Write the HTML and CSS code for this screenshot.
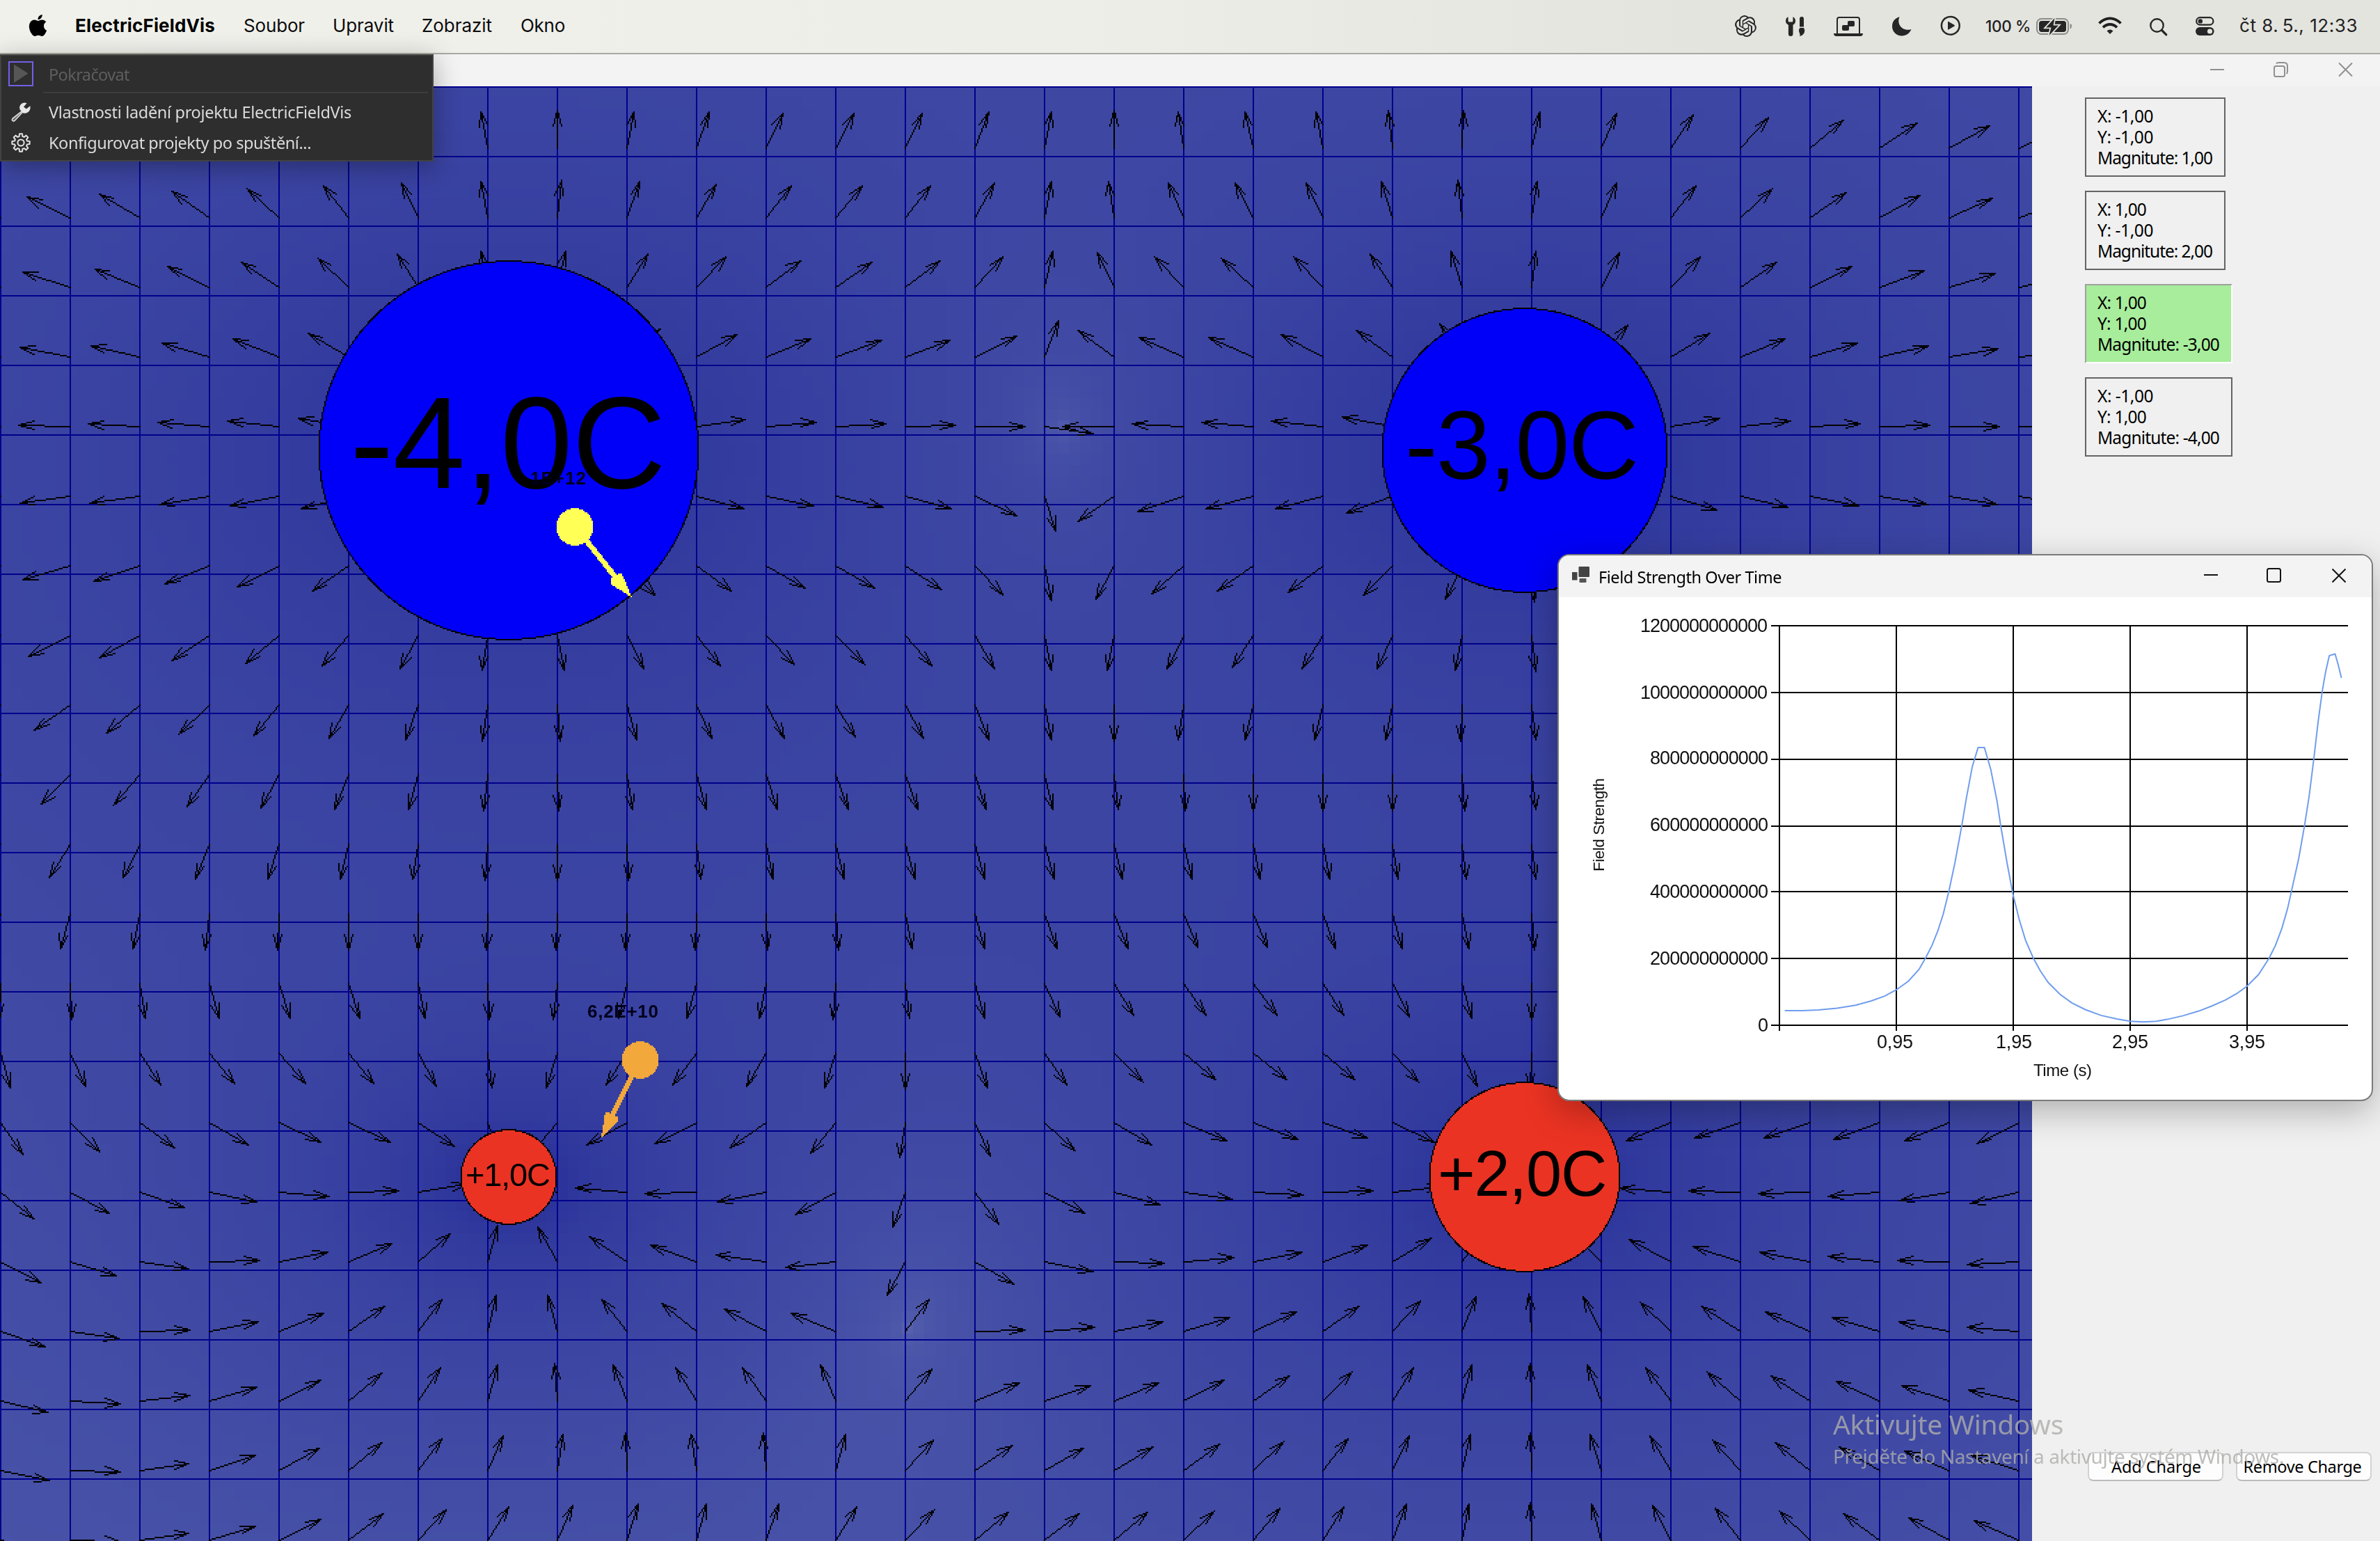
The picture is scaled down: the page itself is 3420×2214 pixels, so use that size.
FILE: index.html
```html
<!DOCTYPE html>
<html lang="cs">
<head>
<meta charset="utf-8">
<title>ElectricFieldVis</title>
<link rel="stylesheet" href="styles.css">
</head>
<body>
<div class="desktop">
  <header class="menubar">
    <nav class="menus">
      <svg class="apple" viewBox="0 0 24 24"><path d="M12.152 6.896c-.948 0-2.415-1.078-3.96-1.04-2.04.027-3.91 1.183-4.961 3.014-2.117 3.675-.546 9.103 1.519 12.09 1.013 1.454 2.208 3.09 3.792 3.039 1.52-.065 2.09-.987 3.935-.987 1.831 0 2.35.987 3.96.948 1.637-.026 2.676-1.48 3.676-2.948 1.156-1.688 1.636-3.325 1.662-3.415-.039-.013-3.182-1.221-3.22-4.857-.026-3.04 2.48-4.494 2.597-4.559-1.429-2.09-3.623-2.324-4.39-2.376-2-.156-3.675 1.09-4.61 1.09zM15.53 3.83c.843-1.012 1.4-2.427 1.245-3.83-1.207.052-2.662.805-3.532 1.818-.78.896-1.454 2.338-1.273 3.714 1.338.104 2.715-.688 3.559-1.701"/></svg>
      <span class="appname"><span data-w="201">ElectricFieldVis</span></span>
      <span><span data-w="88">Soubor</span></span>
      <span><span data-w="88">Upravit</span></span>
      <span><span data-w="101">Zobrazit</span></span>
      <span><span data-w="64">Okno</span></span>
    </nav>
    <div class="status">
      <svg class="i-gpt" viewBox="0 0 24 24"><path d="M22.2819 9.8211a5.9847 5.9847 0 0 0-.5157-4.9108 6.0462 6.0462 0 0 0-6.5098-2.9A6.0651 6.0651 0 0 0 4.9807 4.1818a5.9847 5.9847 0 0 0-3.9977 2.9 6.0462 6.0462 0 0 0 .7427 7.0966 5.98 5.98 0 0 0 .511 4.9107 6.051 6.051 0 0 0 6.5146 2.9001A5.9847 5.9847 0 0 0 13.2599 24a6.0557 6.0557 0 0 0 5.7718-4.2058 5.9894 5.9894 0 0 0 3.9977-2.9001 6.0557 6.0557 0 0 0-.7475-7.0729zm-9.022 12.6081a4.4755 4.4755 0 0 1-2.8764-1.0408l.1419-.0804 4.7783-2.7582a.7948.7948 0 0 0 .3927-.6813v-6.7369l2.02 1.1686a.071.071 0 0 1 .038.0615v5.5826a4.504 4.504 0 0 1-4.4945 4.4944zm-9.6607-4.1254a4.4708 4.4708 0 0 1-.5346-3.0137l.142.0852 4.783 2.7582a.7712.7712 0 0 0 .7806 0l5.8428-3.3685v2.3324a.0804.0804 0 0 1-.0332.0615L9.74 19.9502a4.4992 4.4992 0 0 1-6.1408-1.6464zM2.3408 7.8956a4.485 4.485 0 0 1 2.3655-1.9728V11.6a.7664.7664 0 0 0 .3879.6765l5.8144 3.3543-2.0201 1.1685a.0757.0757 0 0 1-.071 0l-4.8303-2.7865A4.504 4.504 0 0 1 2.3408 7.872zm16.5963 3.8558L13.1038 8.364 15.1192 7.2a.0757.0757 0 0 1 .071 0l4.8303 2.7913a4.4944 4.4944 0 0 1-.6765 8.1042v-5.6772a.79.79 0 0 0-.407-.667zm2.0107-3.0231l-.142-.0852-4.7735-2.7818a.7759.7759 0 0 0-.7854 0L9.409 9.2297V6.8974a.0662.0662 0 0 1 .0284-.0615l4.8303-2.7866a4.4992 4.4992 0 0 1 6.6802 4.66zM8.3065 12.863l-2.02-1.1638a.0804.0804 0 0 1-.038-.0567V6.0742a4.4992 4.4992 0 0 1 7.3757-3.4537l-.142.0805L8.704 5.459a.7948.7948 0 0 0-.3927.6813zm1.0976-2.3654l2.602-1.4998 2.6069 1.4998v2.9994l-2.5974 1.4997-2.6067-1.4997Z"/></svg>
      <svg class="i-tools" viewBox="0 0 28 28"><path d="M3.600 .3V6.200Q3.600 7.500 4.900 7.500H9.100Q10.400 7.500 10.400 6.200V.3Q14 2 14 6.300Q14 9.800 10.500 11.800V24.500Q10.500 28 7 28Q3.900 28 3.900 24.500V11.800Q0 9.800 0 6.300Q0 2 3.600 .3Z"/><path d="M20 3Q20 0 23 0Q26 0 26 3V14.500H20Z"/><path d="M20.500 16H26Q28 19 27 22Q25.500 27 20 28Q21 25.500 19.700 23Q17.800 18.500 20.500 16Z"/></svg>
      <svg class="i-laptop" viewBox="0 0 42 28"><path d="M5 24V4Q5 1 8 1H34Q37 1 37 4V24" fill="none" stroke="#262626" stroke-width="2"/><path d="M0 24H42Q42 28 38 28H4Q0 28 0 24Z"/><rect x="20" y="6" width="10" height="8" rx="2"/><rect x="12" y="12" width="10" height="8" rx="2"/></svg>
      <svg class="i-moon" viewBox="0 0 28 28"><path d="M10.500 .3C6 11 15 22 27.500 18C25 24 20 27.500 14 27.500C6 27.500 0 21.500 0 14C0 7 4 2 10.500 .3Z"/></svg>
      <svg class="i-play" viewBox="0 0 30 30"><circle cx="14.800" cy="14.800" r="12.900" fill="none" stroke="#262626" stroke-width="2.500"/><path d="M11 9.500Q11 8.500 12 9L20.500 14Q21.500 14.800 20.500 15.500L12 20.500Q11 21 11 20Z"/></svg>
      <span class="percent"><span data-w="65">100&nbsp;%</span></span>
      <svg class="i-batt" viewBox="0 0 52 26"><rect x="1" y="2" width="45" height="22" rx="6.500" fill="none" stroke="#8c8c89" stroke-width="2"/><rect x="4" y="5" width="39" height="16" rx="4"/><path d="M48.500 9Q52 10.500 51 13Q51 15.500 48.500 17Z" fill="#8c8c89"/><path d="M26.500 1L14 14.500H21.500L18.500 26L32 11.500H24.500Z" stroke="#e4e4df" stroke-width="3.500" paint-order="stroke"/></svg>
      <svg class="i-wifi" viewBox="0 0 34 26"><g fill="none" stroke="#1f1f1f" stroke-width="3.800"><path d="M1.500 9.500Q8.500 2.300 17 2.300T32.500 9.500"/><path d="M7 15.300Q11.500 11 17 11T27 15.300"/></g><path d="M12.500 20.500Q17 16.300 21.500 20.500L17 25Z"/></svg>
      <svg class="i-search" viewBox="0 0 26 26"><g fill="none" stroke="#262626"><circle cx="10.500" cy="10.500" r="9.200" stroke-width="2.400"/><path d="M17.500 17.500L23.800 23.800" stroke-width="3.200" stroke-linecap="round"/></g></svg>
      <svg class="i-cc" viewBox="0 0 27 27"><rect x="1.200" y="1.200" width="24.200" height="10.400" rx="5.200" fill="none" stroke="#262626" stroke-width="2.200"/><circle cx="6.800" cy="6.400" r="3.200"/><rect x="0" y="15" width="26.600" height="12" rx="6"/><circle cx="20.500" cy="21" r="3.600" fill="#e4e4df"/></svg>
      <span class="clock"><span data-w="170">čt 8.&#8201;5., 12:33</span></span>
    </div>
  </header>

  <div class="titlebar">
    <svg width="206" height="22" viewBox="0 0 206 22"><g fill="none" stroke="#909090" stroke-width="2"><path d="M0 11H20"/><rect x="92" y="6" width="15" height="15" rx="2.500"/><path d="M95 2.500Q96 1 98 1H106Q111 1 111 6V14Q111 16 109.500 17"/><path d="M185 1.500L204 20.500M204 1.500L185 20.500"/></g></svg>
  </div>

  <div class="client">
    <main class="field">
      <canvas id="field" width="1460" height="1045"></canvas>
      <svg class="labels" viewBox="0 124 2920 2090">
        <g class="charge">
          <text x="503" y="701" font-size="187" textLength="454">-4,0C</text>
          <text x="2019" y="688" font-size="140" textLength="336">-3,0C</text>
          <text x="669" y="1703.500" font-size="47" textLength="122">+1,0C</text>
          <text x="2066" y="1717.500" font-size="92" textLength="243.500">+2,0C</text>
        </g>
        <g class="probe">
          <text x="762" y="696" textLength="80">1E+12</text>
          <text x="844" y="1462" textLength="102">6,2E+10</text>
        </g>
      </svg>
    </main>
    <aside class="side">
      <div class="cards">
        <div class="card"><span data-w="80">X: -1,00</span><span data-w="80">Y: -1,00</span><span data-w="165">Magnitute: 1,00</span></div>
        <div class="card"><span data-w="70">X: 1,00</span><span data-w="80">Y: -1,00</span><span data-w="165">Magnitute: 2,00</span></div>
        <div class="card wide selected"><span data-w="70">X: 1,00</span><span data-w="70">Y: 1,00</span><span data-w="175">Magnitute: -3,00</span></div>
        <div class="card wide"><span data-w="80">X: -1,00</span><span data-w="70">Y: 1,00</span><span data-w="175">Magnitute: -4,00</span></div>
      </div>
      <div class="actions">
        <button type="button" class="add"><span data-w="129">Add Charge</span></button>
        <button type="button" class="remove"><span data-w="170">Remove Charge</span></button>
      </div>
    </aside>
  </div>

  <div class="dropdown">
    <div class="item disabled">
      <svg class="boxed" viewBox="0 0 36 36"><rect x="1" y="1" width="34" height="34" fill="none" stroke="#7160e8" stroke-width="2"/><path d="M8 4.500V31L28.500 17.500Z" fill="#565656"/></svg>
      <span data-w="116">Pokračovat</span>
    </div>
    <div class="sep"></div>
    <div class="item">
      <svg viewBox="0 0 28 28"><path d="M16.500 12L2.200 23.200Q.6 25.200 2.300 26.500Q4 27.800 5.500 26L17 13.500" fill="#6a6a6a" stroke="#d6d6d6" stroke-width="1.800"/><path d="M22.500 1.200Q17 -.8 13.600 3.200Q11.200 6.500 12.600 10.400L17.300 15.500Q22 16.500 25.400 13.200Q28.500 9.800 27.300 5.300L21.800 9.600L18 6.400Z" fill="#e8e8e8"/></svg>
      <span data-w="435">Vlastnosti ladění projektu ElectricFieldVis</span>
    </div>
    <div class="item last">
      <svg viewBox="-14 -14 28 28"><g fill="none" stroke="#e4e4e4" stroke-width="2" stroke-linejoin="round"><path d="M8.980 -2.410L12.640 -2V2L8.980 2.410L8.050 4.650L10.360 7.520L7.520 10.360L4.650 8.050L2.410 8.980L2 12.640H-2L-2.410 8.980L-4.650 8.050L-7.520 10.360L-10.360 7.520L-8.050 4.650L-8.980 2.410L-12.640 2V-2L-8.980 -2.410L-8.050 -4.650L-10.360 -7.520L-7.520 -10.360L-4.650 -8.050L-2.410 -8.980L-2 -12.640H2L2.410 -8.980L4.650 -8.050L7.520 -10.360L10.360 -7.520L8.050 -4.650Z"/><circle r="4.600"/></g></svg>
      <span data-w="377">Konfigurovat projekty po spuštění...</span>
    </div>
  </div>

  <div class="watermark">
    <p class="big"><span data-w="331">Aktivujte Windows</span></p>
    <p class="small"><span data-w="648">Přejděte do Nastavení a aktivujte systém Windows.</span></p>
  </div>

  <section class="chartwin">
    <div class="charttitle">
      <svg class="formicon" viewBox="0 0 26 24"><rect x="0" y="8" width="7.500" height="11.500" fill="#444"/><rect x="9.500" y="0" width="15.500" height="15" rx="1" fill="#444"/><rect x="10.500" y="17" width="10" height="6" rx="1" fill="#555"/></svg>
      <span class="caption"><span data-w="263">Field Strength Over Time</span></span>
      <svg width="204" height="22" viewBox="0 0 204 22"><g fill="none" stroke="#111" stroke-width="2"><path d="M-1 10H19"/><rect x="90" y="1" width="19" height="19" rx="2.500"/><path d="M183.500 1.500L202.500 20.500M202.500 1.500L183.500 20.500"/></g></svg>
    </div>
    <svg class="chart" viewBox="2240 858 1168 721">
      <g stroke="#000" stroke-width="2" shape-rendering="crispEdges">
        <path d="M2545 899H3374M2545 995H3374M2545 1091H3374M2545 1187H3374M2545 1281H3374M2545 1377H3374M2545 1473H3374"/>
        <path d="M2557 898V1481M2725 898V1481M2893 898V1481M3061 898V1481M3229 898V1481"/>
      </g>
      <g class="ylab">
        <text x="2357" y="908" textLength="183">1200000000000</text>
        <text x="2357" y="1004" textLength="183">1000000000000</text>
        <text x="2371" y="1098" textLength="170">800000000000</text>
        <text x="2371" y="1194" textLength="170">600000000000</text>
        <text x="2371" y="1290" textLength="170">400000000000</text>
        <text x="2371" y="1386" textLength="170">200000000000</text>
        <text x="2526" y="1482">0</text>
        <text x="2697" y="1506" textLength="52">0,95</text>
        <text x="2868" y="1506" textLength="52">1,95</text>
        <text x="3035" y="1506" textLength="52">2,95</text>
        <text x="3203" y="1506" textLength="52">3,95</text>
      </g>
      <text class="axis" x="2922" y="1546" textLength="84">Time (s)</text>
      <text class="axis side-axis" transform="translate(2305 1252) rotate(-90)" textLength="134">Field Strength</text>
      <g transform="translate(2230 780) scale(.7589 .5230)">
        <polyline class="series" points="441,1285 475,1285 505,1283 540,1278 575,1270 605,1258 630,1245 652,1228 675,1204 695,1172 707,1142 720,1105 731,1065 741,1020 752,955 763,880 776,778 785,700 796,615 807,562 819,562 831,622 843,710 850,778 862,880 873,965 885,1035 897,1092 912,1142 925,1176 940,1208 962,1240 985,1264 1010,1282 1040,1298 1070,1308 1095,1314 1120,1316 1145,1314 1165,1309 1195,1299 1225,1286 1250,1272 1275,1256 1297,1238 1316,1218 1338,1186 1358,1141 1370,1106 1382,1060 1393,1005 1403,940 1414,868 1425,778 1434,695 1443,590 1451,490 1459,405 1465,355 1472,310 1483,305 1489,335 1495,371"/>
      </g>
    </svg>
  </section>
</div>
<script src="field.js"></script>
</body>
</html>
```
FILE: styles.css
```css
* { box-sizing: border-box; }
body { margin: 0; font-family: "Noto Sans", sans-serif; }
svg { display: block; flex: none; overflow: visible; }
.desktop { position: relative; width: 3420px; height: 2214px; overflow: hidden; display: flex; flex-direction: column; background: #f0f0f0; }

.menubar { height: 78px; display: flex; justify-content: space-between; background: linear-gradient(90deg, #f1f1ec, #eeeee9 45%, #e4e4df 72%, #e4e4df); border-bottom: 2px solid #a9a99f; font: 26px/74px Inter, sans-serif; color: #0c0c0c; white-space: nowrap; }
.menus { display: grid; grid-template-columns: 69px 242px 128px 128px 142px 80px; padding-left: 39px; }
.apple { width: 31px; height: 31px; margin-top: 21px; fill: #000; }
.appname { font-weight: 700; color: #000; }
.status { display: flex; width: 927px; fill: #262626; color: #222; }
.i-gpt { width: 31px; height: 31px; margin-top: 22px; }
.i-tools { width: 28px; height: 28px; margin: 24px 0 0 42px; }
.i-laptop { width: 42px; height: 28px; margin: 24px 0 0 41px; }
.i-moon { width: 28px; height: 28px; margin: 24px 0 0 42px; }
.i-play { width: 30px; height: 30px; margin: 22px 0 0 41px; }
.percent { width: 66px; margin-left: 35px; font-size: 22.5px; font-weight: 500; line-height: 76px; }
.i-batt { width: 52px; height: 26px; margin: 25px 0 0 7px; }
.i-wifi { width: 34px; height: 26px; margin: 24px 0 0 37px; }
.i-search { width: 26px; height: 26px; margin: 26px 0 0 40px; }
.i-cc { width: 27px; height: 27px; margin: 24px 0 0 40px; }
.clock { margin-left: 36px; }

.titlebar { height: 46px; background: #f3f3f3; display: flex; justify-content: flex-end; padding: 11px 38px 0 0; }
.client { display: flex; height: 2090px; }
.field { position: relative; width: 2920px; height: 2090px; }
.field canvas { display: block; width: 2920px; height: 2090px; image-rendering: pixelated; }
.labels { position: absolute; inset: 0; width: 2920px; height: 2090px; font-family: "Liberation Sans", Arial, sans-serif; }
.probe { font-size: 26px; font-weight: 700; fill: #00001c; }

.side { width: 500px; display: flex; flex-direction: column; justify-content: space-between; font-size: 24.5px; color: #000; }
.cards { display: flex; flex-direction: column; gap: 20px; align-items: flex-start; padding: 16px 0 0 76px; }
.card { width: 202px; height: 114px; border: 2px solid #646464; padding: 10px 0 0 16px; display: flex; flex-direction: column; align-items: flex-start; line-height: 30px; white-space: nowrap; }
.card.wide { width: 212px; }
.card.selected { background: #a7ed9b; border-color: #a0a0a0 #fff #fff #a0a0a0; }
.actions { display: flex; gap: 18px; padding: 0 13px 86px 80px; }
.actions button { width: 195px; flex: none; height: 42px; padding: 0; border: 2px solid #d2d2d2; border-bottom-color: #bcbcbc; border-radius: 8px; background: #fdfdfd; font: 23.5px/38px "Noto Sans", sans-serif; color: #000; white-space: nowrap; }
.actions .add { padding-left: 2px; }
.actions .remove { padding-right: 4px; }

.dropdown { position: absolute; left: 0; top: 78px; width: 623px; height: 154px; background: #2e2e2e; border: 2px solid #424242; box-shadow: 0 8px 36px rgba(0,0,0,.32); padding-left: 14px; color: #dadada; font-size: 23.5px; white-space: nowrap; }
.item { display: flex; align-items: center; height: 44px; gap: 26px; }
.item.disabled { height: 52px; color: #5e5e5e; gap: 22px; padding-top: 2px; margin-left: -4px; }
.item svg { width: 28px; height: 28px; }
.item .boxed { width: 36px; height: 36px; margin-top: -3px; }
.sep { height: 2px; background: #3d3d3d; margin: 0 6px 5px 46px; }

.watermark { position: absolute; left: 2634px; top: 2018px; color: rgba(172,172,170,.8); white-space: nowrap; }
.watermark p { margin: 0; }
.watermark .big { font-size: 39px; line-height: 56px; }
.watermark .small { font-size: 28px; line-height: 37px; }

.chartwin { position: absolute; left: 2238px; top: 796px; width: 1172px; height: 786px; background: #fff; border: 2px solid #7b7b7b; border-radius: 17px; overflow: hidden; box-shadow: 0 14px 50px rgba(0,0,0,.28); }
.charttitle { height: 60px; background: #f3f3f3; display: flex; padding: 16px 36px 0 19px; }
.charttitle > svg:last-child { margin-left: auto; margin-top: 2px; }
.formicon { width: 26px; height: 24px; }
.caption { margin: -1px 0 0 12px; font-size: 23.5px; line-height: 32px; color: #000; white-space: nowrap; }
.chart { width: 1168px; height: 721px; font-family: "Liberation Sans", Arial, sans-serif; }
.ylab { font-size: 27px; fill: #111; }
.axis { font-size: 24px; fill: #111; }
.side-axis { font-size: 22.5px; }
.series { fill: none; stroke: #6f9dee; stroke-width: 2; vector-effect: non-scaling-stroke; }
```
FILE: field.js
```js
// Stretch each label to the advance width of the system UI font.
for (const el of document.querySelectorAll('[data-w]')) {
  const natural = el.getBoundingClientRect().width;
  el.style.letterSpacing = (el.dataset.w - natural) / el.textContent.length + 'px';
}

const ctx = document.getElementById('field').getContext('2d');
const W = 1460, H = 1044, UX = W / 4, UY = H / 4;
const charges = [[-1, -1, 1], [1, -1, 2], [1, 1, -3], [-1, 1, -4]];

function force(px, py) {
  const x = (px - W / 2) / UX, y = (H / 2 - py) / UY;
  let fx = 0, fy = 0;
  for (const [cx, cy, q] of charges) {
    const dx = x - cx, dy = y - cy, r = Math.hypot(dx, dy) || 1e-6;
    fx -= q * dx / r ** 3;
    fy -= q * dy / r ** 3;
  }
  return [fx, fy];
}

// Background: 8px cells shaded by the logarithm of the field strength.
for (let y = 0; y < 1045; y += 8) {
  for (let x = 0; x < W; x += 8) {
    const t = Math.max(-1.8, Math.min(2.3, Math.log10(Math.hypot(...force(x, y)))));
    ctx.fillStyle = `rgb(${66 - 11 * t}, ${76 - 12 * t}, ${165 - 5 * t})`;
    ctx.fillRect(x, y, 8, 8);
  }
}

ctx.fillStyle = '#00008b';
for (let x = 0; x < W; x += 50) ctx.fillRect(x, 0, 1, 1045);
for (let y = 0; y < 1045; y += 50) ctx.fillRect(0, y, W, 1);

function line(x0, y0, x1, y1) {
  x0 = Math.trunc(x0); y0 = Math.trunc(y0); x1 = Math.trunc(x1); y1 = Math.trunc(y1);
  const n = Math.max(Math.abs(x1 - x0), Math.abs(y1 - y0), 1);
  for (let i = 0; i <= n; i++) {
    ctx.fillRect(Math.round(x0 + (x1 - x0) * i / n), Math.round(y0 + (y1 - y0) * i / n), 1, 1);
  }
}

ctx.fillStyle = '#000';
for (let x = 0; x < W; x += 50) {
  for (let y = 1044; y >= -50; y -= 50) {
    const [fx, fy] = force(x, y), m = Math.hypot(fx, fy);
    const tx = x + fx / m * UX * 0.1, ty = y - fy / m * UY * 0.1;
    const a = Math.atan2(ty - y, tx - x);
    line(x, y, tx, ty);
    for (const w of [-0.28, 0.28]) line(tx, ty, tx - 11 * Math.cos(a + w), ty - 11 * Math.sin(a + w));
  }
}

// Solid disc with an optional one-pixel outline, without antialiasing.
function disc(cx, cy, r, fill, outline) {
  const span = k => (k > 0 ? Math.round(Math.sqrt(k)) : -1);
  for (let y = -r; y <= r; y++) {
    const w = span((r + 0.3) ** 2 - y * y);
    if (outline) {
      ctx.fillStyle = '#000';
      ctx.fillRect(cx - w, cy + y, 2 * w + 1, 1);
      const v = span((r - 0.7) ** 2 - y * y);
      if (v < 0) continue;
      ctx.fillStyle = fill;
      ctx.fillRect(cx - v, cy + y, 2 * v + 1, 1);
    } else {
      ctx.fillStyle = fill;
      ctx.fillRect(cx - w, cy + y, 2 * w, 1);
    }
  }
}
for (const [cx, cy, q] of charges) {
  disc(W / 2 + cx * UX, H / 2 - cy * UY, 34 * Math.abs(q), q < 0 ? '#0000f8' : '#eb3323', true);
}

function poly(pts, color) {
  ctx.fillStyle = color;
  const xs = pts.map(p => p[0]), ys = pts.map(p => p[1]);
  for (let y = Math.floor(Math.min(...ys)); y <= Math.max(...ys); y++) {
    for (let x = Math.floor(Math.min(...xs)); x <= Math.max(...xs); x++) {
      let inside = false;
      for (let i = 0, j = pts.length - 1; i < pts.length; j = i++) {
        const [ax, ay] = pts[i], [bx, by] = pts[j];
        if ((ay > y + .5) !== (by > y + .5) && x + .5 < (bx - ax) * (y + .5 - ay) / (by - ay) + ax) inside = !inside;
      }
      if (inside) ctx.fillRect(x, y, 1, 1);
    }
  }
}
function probe(cx, cy, tx, ty, head, color) {
  const l = Math.hypot(tx - cx, ty - cy), nx = -(ty - cy) / l * 1.9, ny = (tx - cx) / l * 1.9;
  const ex = tx - (tx - cx) / l * 12, ey = ty - (ty - cy) / l * 12;
  poly([[cx + nx, cy + ny], [ex + nx, ey + ny], [ex - nx, ey - ny], [cx - nx, cy - ny]], color);
  poly(head, color);
  disc(cx, cy, 13, color, false);
}
probe(413, 316, 453.6, 366.9, [[454, 367.2], [447, 350.3], [443.8, 350.3], [441.5, 353], [438.6, 353.5], [438.6, 357.4]], '#ffff55');
probe(460, 699, 432.4, 754.5, [[432, 755], [434.8, 737.5], [437.1, 736.5], [441, 740.5], [444, 740], [444, 743.2]], '#f2a83b');
```
